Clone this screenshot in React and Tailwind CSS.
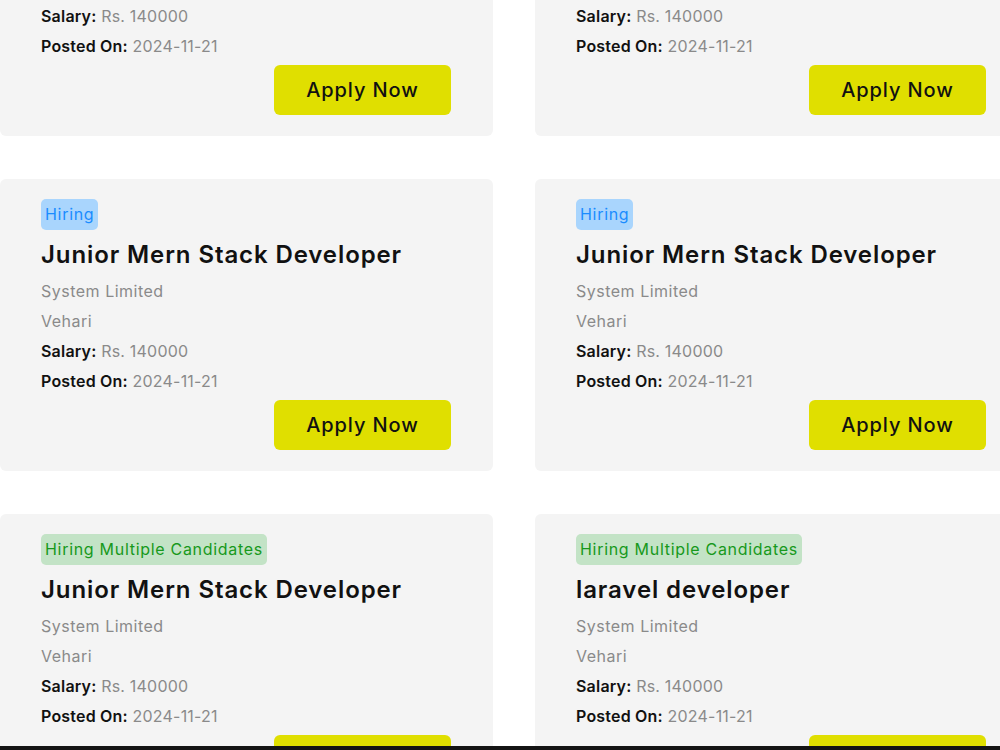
import React from "react";

const rows = [
  [
    { badge: "Hiring", title: "Junior Mern Stack Developer" },
    { badge: "Hiring", title: "Junior Mern Stack Developer" },
  ],
  [
    { badge: "Hiring", title: "Junior Mern Stack Developer" },
    { badge: "Hiring", title: "Junior Mern Stack Developer" },
  ],
  [
    { badge: "Hiring Multiple Candidates", title: "Junior Mern Stack Developer" },
    { badge: "Hiring Multiple Candidates", title: "laravel developer" },
  ],
];

function Badge({ text }) {
  if (text === "Hiring") {
    return (
      <span className="inline-block h-[31px] px-[4px] rounded-[5px] bg-[#a9d5fd] text-[#1a8cff] text-[16px] leading-[31px] tracking-[0.7px]">
        {text}
      </span>
    );
  }
  return (
    <span className="inline-block h-[31px] px-[4px] rounded-[5px] bg-[#c3e3c6] text-[#17991c] text-[16px] leading-[31px] tracking-[0.7px]">
      {text}
    </span>
  );
}

function Card({ badge, title }) {
  return (
    <div className="w-[493px] h-[292px] rounded-[6px] bg-[#f4f4f4] pl-[41px] pr-[42px] pt-[20px] flex flex-col">
      <div className="flex">
        <Badge text={badge} />
      </div>
      <h2 className="pt-[3px] text-[24px] leading-[43px] font-semibold text-[#111111] tracking-[0.9px]">{title}</h2>
      <p className="text-[16px] leading-[30px] text-[#8a8a8a] tracking-[0.5px]">System Limited</p>
      <p className="text-[16px] leading-[30px] text-[#8a8a8a] tracking-[0.5px]">Vehari</p>
      <p className="text-[16px] leading-[30px] text-[#8a8a8a] tracking-[0.2px]">
        <span className="font-semibold text-[#111111]">Salary:</span> Rs. 140000
      </p>
      <p className="text-[16px] leading-[30px] text-[#8a8a8a] tracking-[0.2px]">
        <span className="font-semibold text-[#111111]">Posted On:</span> 2024-11-21
      </p>
      <div className="flex justify-end mt-[4px]">
        <button className="w-[177px] h-[50px] rounded-[6px] bg-[#e0df00] text-[20px] font-medium text-[#111111] tracking-[0.9px]">
          Apply Now
        </button>
      </div>
    </div>
  );
}

export default function App() {
  return (
    <div
      className="relative w-[1000px] h-[750px] overflow-hidden bg-white"
      style={{ fontFamily: "Inter, 'Noto Sans', sans-serif" }}
    >
      <div className="flex flex-col gap-[43px] mt-[-156px]">
        {rows.map((row, i) => (
          <div key={i} className="grid grid-cols-[493px_493px] gap-x-[42px]">
            {row.map((c, j) => (
              <Card key={j} {...c} />
            ))}
          </div>
        ))}
      </div>
      <div className="absolute left-0 right-0 bottom-0 h-[4px] bg-[#141414]" />
    </div>
  );
}
